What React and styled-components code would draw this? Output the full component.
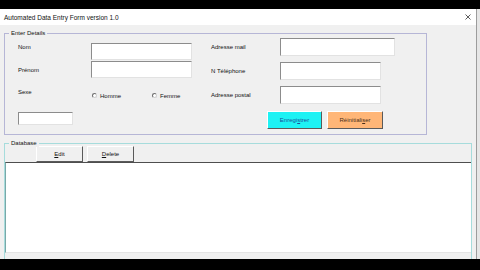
import React from "react";
import styled, { createGlobalStyle } from "styled-components";

const GlobalStyle = createGlobalStyle`
  html, body {
    margin: 0;
    padding: 0;
    background: #000;
  }
  body {
    font-family: "Liberation Sans", Arial, sans-serif;
  }
`;

const Screen = styled.div`
  width: 480px;
  height: 270px;
  padding-top: 9px;
  box-sizing: border-box;
  background: #000;
  display: flex;
  align-items: flex-start;
  overflow: hidden;
`;

const Window = styled.div`
  width: 476px;
  height: 250px;
  background: #f0f0f0;
  border-right: 1px solid #9c9c9c;
  display: flex;
  flex-direction: column;
  overflow: hidden;
  flex-shrink: 0;
`;

const Behind = styled.div`
  flex: 1;
  height: 250px;
  background: #e6e6e6;
`;

const TitleBar = styled.div`
  height: 16px;
  flex-shrink: 0;
  background: #fff;
  display: flex;
  align-items: center;
  justify-content: space-between;
  padding: 0 5px 0 4px;
  font-size: 6.5px;
  color: #111;
`;

const Body = styled.div`
  flex: 1;
  padding-left: 4px;
  display: flex;
  flex-direction: column;
`;

const Group = styled.div`
  position: relative;
  box-sizing: border-box;
  margin-top: 8px;
  width: ${(p) => p.$width}px;
  height: ${(p) => p.$height}px;
  border: 1px solid ${(p) => p.$color};
  flex-shrink: 0;
`;

const Legend = styled.span`
  position: absolute;
  top: -4px;
  left: 4px;
  padding: 0 2px;
  background: #f0f0f0;
  font-size: 6px;
  line-height: 7px;
  color: #111;
`;

const DetailsInner = styled.div`
  display: flex;
  gap: 19px;
  padding-left: 13px;
`;

const LeftCol = styled.div`
  width: 174px;
  padding-top: 9px;
  display: flex;
  flex-direction: column;
`;

const RightCol = styled.div`
  padding-top: 4px;
  display: flex;
  flex-direction: column;
  gap: 5px;
`;

const FieldRow = styled.div`
  display: flex;
  align-items: center;
  height: ${(p) => p.$h}px;
  margin-bottom: 1px;
`;

const Label = styled.span`
  width: ${(p) => p.$w}px;
  flex-shrink: 0;
  font-size: 6px;
  color: #111;
  align-self: ${(p) => (p.$top ? "flex-start" : "center")};
  padding-top: ${(p) => (p.$top ? "1px" : "0")};
`;

const TextBox = styled.div`
  box-sizing: border-box;
  width: ${(p) => p.$w}px;
  height: ${(p) => p.$h}px;
  background: #fff;
  border: 1px solid;
  border-color: #8c8c8c #e2e2e2 #e2e2e2 #8c8c8c;
`;

const SexRow = styled.div`
  display: flex;
  margin-top: 9px;
  height: 12px;
`;

const RadioGroup = styled.div`
  display: flex;
  padding-top: 4px;
  margin-left: 1px;
`;

const RadioItem = styled.label`
  width: 60px;
  display: flex;
  align-items: center;
  gap: 3px;
  font-size: 6px;
  color: #111;
  height: 7px;
`;

const RadioDot = styled.span`
  box-sizing: border-box;
  width: 5px;
  height: 5px;
  border-radius: 50%;
  border: 1px solid #6e6e6e;
  border-right-color: #d0d0d0;
  border-bottom-color: #d0d0d0;
  background: #fff;
`;

const SmallBox = styled(TextBox)`
  margin-top: 12px;
`;

const ButtonRow = styled.div`
  display: flex;
  gap: ${(p) => p.$gap}px;
  margin-top: ${(p) => p.$top}px;
  padding-left: ${(p) => p.$left}px;
`;

const FormButton = styled.div`
  box-sizing: border-box;
  width: ${(p) => p.$w}px;
  height: ${(p) => p.$h}px;
  background: ${(p) => p.$bg};
  color: ${(p) => p.$fg};
  border: 1px solid;
  border-color: #ffffff #5a5a5a #5a5a5a #ffffff;
  display: flex;
  align-items: center;
  justify-content: center;
  font-size: 6px;
  u {
    text-decoration: underline;
  }
`;

const ListBox = styled.div`
  height: 89px;
  background: #fff;
  border-top: 1px solid #4e4e4e;
  border-left: 1px solid #7aa8a8;
  border-bottom: 1px solid #e4e4e4;
`;

const CloseIcon = () => (
  <svg width="6" height="6" viewBox="0 0 6 6">
    <path d="M0.5 0.5 L5.5 5.5 M5.5 0.5 L0.5 5.5" stroke="#333" strokeWidth="0.8" />
  </svg>
);

const leftFields = [
  { label: "Nom", top: true },
  { label: "Prénom", top: false },
];

const rightFields = [
  { label: "Adresse mail", w: 115 },
  { label: "N Téléphone", w: 101 },
  { label: "Adresse postal", w: 101 },
];

export default function App() {
  return (
    <>
      <GlobalStyle />
      <Screen>
        <Window>
          <TitleBar>
            <span>Automated Data Entry Form version 1.0</span>
            <CloseIcon />
          </TitleBar>
          <Body>
            <Group $width={423} $height={102} $color="#b6b6d6">
              <Legend>Enter Details</Legend>
              <DetailsInner>
                <LeftCol>
                  {leftFields.map((f) => (
                    <FieldRow key={f.label} $h={17}>
                      <Label $w={73} $top={f.top}>
                        {f.label}
                      </Label>
                      <TextBox $w={101} $h={17} />
                    </FieldRow>
                  ))}
                  <SexRow>
                    <Label $w={73} $top>
                      Sexe
                    </Label>
                    <RadioGroup>
                      <RadioItem>
                        <RadioDot />
                        Homme
                      </RadioItem>
                      <RadioItem>
                        <RadioDot />
                        Femme
                      </RadioItem>
                    </RadioGroup>
                  </SexRow>
                  <SmallBox $w={55} $h={13} />
                </LeftCol>
                <RightCol>
                  {rightFields.map((f) => (
                    <FieldRow key={f.label} $h={18}>
                      <Label $w={69}>{f.label}</Label>
                      <TextBox $w={f.w} $h={18} />
                    </FieldRow>
                  ))}
                  <ButtonRow $gap={5} $top={1} $left={56}>
                    <FormButton $w={55} $h={18} $bg="#1ef2f4" $fg="#1d4f9a">
                      <span>
                        Enregi<u>s</u>trer
                      </span>
                    </FormButton>
                    <FormButton $w={56} $h={18} $bg="#ffb677" $fg="#4a2e1a">
                      <span>
                        Réinitiali<u>s</u>er
                      </span>
                    </FormButton>
                  </ButtonRow>
                </RightCol>
              </DetailsInner>
            </Group>
            <Group $width={468} $height={130} $color="#a6dcdc">
              <Legend>Database</Legend>
              <ButtonRow $gap={4} $top={2} $left={31}>
                <FormButton $w={47} $h={16} $bg="#f0f0f0" $fg="#111">
                  <span>
                    <u>E</u>dit
                  </span>
                </FormButton>
                <FormButton $w={47} $h={16} $bg="#f0f0f0" $fg="#111">
                  <span>
                    <u>D</u>elete
                  </span>
                </FormButton>
              </ButtonRow>
              <ListBox />
            </Group>
          </Body>
        </Window>
        <Behind />
      </Screen>
    </>
  );
}
